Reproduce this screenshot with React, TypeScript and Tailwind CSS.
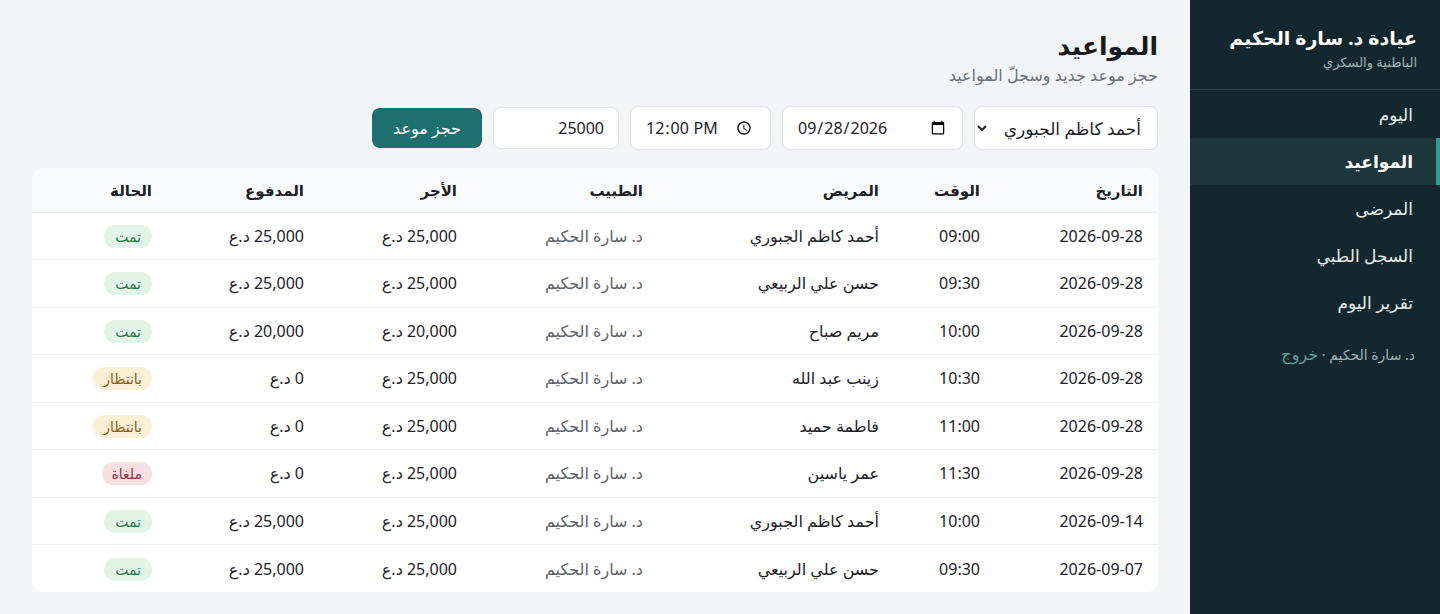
import { useState } from "react";

type Status = "done" | "waiting" | "cancelled";

interface Appointment {
  date: string;
  time: string;
  patient: string;
  doctor: string;
  fee: string;
  paid: string;
  status: Status;
}

const appointments: Appointment[] = [
  { date: "2026-09-28", time: "09:00", patient: "أحمد كاظم الجبوري", doctor: "د. سارة الحكيم", fee: "25,000 د.ع", paid: "25,000 د.ع", status: "done" },
  { date: "2026-09-28", time: "09:30", patient: "حسن علي الربيعي", doctor: "د. سارة الحكيم", fee: "25,000 د.ع", paid: "25,000 د.ع", status: "done" },
  { date: "2026-09-28", time: "10:00", patient: "مريم صباح", doctor: "د. سارة الحكيم", fee: "20,000 د.ع", paid: "20,000 د.ع", status: "done" },
  { date: "2026-09-28", time: "10:30", patient: "زينب عبد الله", doctor: "د. سارة الحكيم", fee: "25,000 د.ع", paid: "0 د.ع", status: "waiting" },
  { date: "2026-09-28", time: "11:00", patient: "فاطمة حميد", doctor: "د. سارة الحكيم", fee: "25,000 د.ع", paid: "0 د.ع", status: "waiting" },
  { date: "2026-09-28", time: "11:30", patient: "عمر ياسين", doctor: "د. سارة الحكيم", fee: "25,000 د.ع", paid: "0 د.ع", status: "cancelled" },
  { date: "2026-09-14", time: "10:00", patient: "أحمد كاظم الجبوري", doctor: "د. سارة الحكيم", fee: "25,000 د.ع", paid: "25,000 د.ع", status: "done" },
  { date: "2026-09-07", time: "09:30", patient: "حسن علي الربيعي", doctor: "د. سارة الحكيم", fee: "25,000 د.ع", paid: "25,000 د.ع", status: "done" },
];

const navItems = ["اليوم", "المواعيد", "المرضى", "السجل الطبي", "تقرير اليوم"];

const StatusBadge = ({ status }: { status: Status }) => {
  if (status === "done") {
    return <span className="inline-block rounded-full bg-[#e2f3e7] px-[11px] text-[14px] leading-[23px] text-[#2b7a44]">تمت</span>;
  }
  if (status === "waiting") {
    return <span className="inline-block rounded-full bg-[#fcefd6] px-[10px] text-[14px] leading-[23px] text-[#8a5b13]">بانتظار</span>;
  }
  return <span className="inline-block rounded-full bg-[#f6e0e2] px-[10px] text-[14px] leading-[23px] text-[#97303c]">ملغاة</span>;
};

const Sidebar = () => {
  const active = "المواعيد";
  return (
    <aside className="w-[250px] shrink-0 bg-[#13282e] text-white">
      <div className="border-b border-[#264047] px-[23px] pb-[17px] pt-[24px]">
        <div className="whitespace-nowrap text-[19px] font-bold leading-[28px]">عيادة د. سارة الحكيم</div>
        <div className="text-[13px] leading-[20px] text-[#9fb3b6]">الباطنية والسكري</div>
      </div>
      <nav className="pt-[1px]">
        {navItems.map((item) => (
          <div
            key={item}
            className={
              item === active
                ? "h-[47px] border-r-[4px] border-[#2a9d8f] bg-[#1c363c] pr-[23px] text-[17px] font-semibold leading-[47px] text-white"
                : "h-[47px] border-r-[4px] border-transparent pr-[23px] text-[17px] leading-[47px] text-[#e6eeef]"
            }
          >
            {item}
          </div>
        ))}
      </nav>
      <div className="px-[25px] pt-[16px] text-[14px] text-[#9fb3b6]">
        د. سارة الحكيم · <span className="text-[16px] text-[#5f9c95]">خروج</span>
      </div>
    </aside>
  );
};

const App = () => {
  const [patient, setPatient] = useState("ahmad");
  const [date, setDate] = useState("2026-09-28");
  const [time, setTime] = useState("12:00");
  const [fee, setFee] = useState("25000");

  return (
    <div dir="rtl" className="flex min-h-screen bg-[#f3f4f6] font-['Noto_Sans','DejaVu_Sans',sans-serif] text-[#1d2126]">
      <Sidebar />
      <main className="flex-1 px-[32px] pt-[26px] pb-[22px]">
        <h1 className="text-[25px] font-bold leading-[38px] text-[#161a1d]">المواعيد</h1>
        <p className="text-[16px] leading-[22px] text-[#6b7178]">حجز موعد جديد وسجلّ المواعيد</p>

        <div className="mt-[20px] flex items-center gap-[11px]">
          <select
            value={patient}
            onChange={(e) => setPatient(e.target.value)}
            className="h-[44px] w-[184px] rounded-[8px] border border-[#dfe2e6] bg-white px-[12px] text-[17px]"
          >
            <option value="ahmad">أحمد كاظم الجبوري</option>
            <option value="hasan">حسن علي الربيعي</option>
          </select>
          <input
            type="date"
            value={date}
            onChange={(e) => setDate(e.target.value)}
            className="h-[44px] w-[181px] rounded-[8px] border border-[#dfe2e6] bg-white px-[14px] text-[16px]"
          />
          <input
            type="time"
            value={time}
            onChange={(e) => setTime(e.target.value)}
            className="h-[44px] w-[141px] rounded-[8px] border border-[#dfe2e6] bg-white px-[14px] text-[16px]"
          />
          <input
            type="text"
            value={fee}
            onChange={(e) => setFee(e.target.value)}
            className="h-[42px] w-[126px] rounded-[8px] border border-[#dfe2e6] bg-white px-[14px] text-[16px]"
          />
          <button className="h-[40px] w-[110px] rounded-[8px] bg-[#1e6f70] text-[16px] font-medium text-white">
            حجز موعد
          </button>
        </div>

        <div className="mt-[18px] overflow-hidden rounded-[12px] bg-white">
          <table className="w-full border-collapse text-right text-[16px]">
            <thead>
              <tr className="h-[44px] bg-[#fafbfc] text-[15px]">
                <th className="w-[163px] px-[15px] font-bold">التاريخ</th>
                <th className="w-[101px] px-[15px] font-bold">الوقت</th>
                <th className="w-[236px] px-[15px] font-bold">المريض</th>
                <th className="w-[186px] px-[15px] font-bold">الطبيب</th>
                <th className="w-[153px] px-[15px] font-bold">الأجر</th>
                <th className="w-[152px] px-[15px] font-bold">المدفوع</th>
                <th className="px-[15px] font-bold">الحالة</th>
              </tr>
            </thead>
            <tbody>
              {appointments.map((a, i) => (
                <tr key={i} className="h-[47.5px] border-t border-[#eceef1]">
                  <td className="px-[15px]">{a.date}</td>
                  <td className="px-[15px]">{a.time}</td>
                  <td className="px-[15px]">{a.patient}</td>
                  <td className="px-[15px] text-[#5d636a]">{a.doctor}</td>
                  <td className="px-[15px]">{a.fee}</td>
                  <td className="px-[15px]">{a.paid}</td>
                  <td className="px-[15px]">
                    <StatusBadge status={a.status} />
                  </td>
                </tr>
              ))}
            </tbody>
          </table>
        </div>
      </main>
    </div>
  );
};

export default App;
